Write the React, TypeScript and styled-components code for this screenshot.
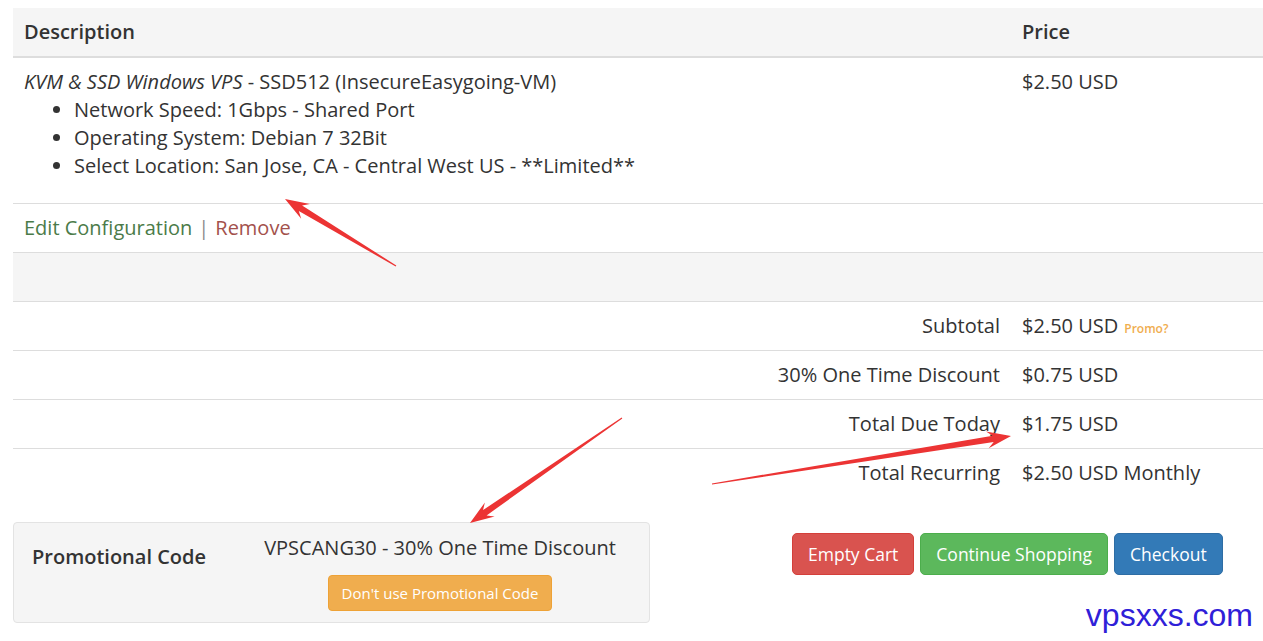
import React from 'react';
import styled, { createGlobalStyle } from 'styled-components';

const GlobalStyle = createGlobalStyle`
  html, body {
    margin: 0;
    padding: 0;
    background: #ffffff;
  }
  body {
    font-family: "Open Sans", "Noto Sans", Arial, sans-serif;
    font-size: 20px;
    line-height: 28px;
    color: #333333;
  }
`;

const Page = styled.div`
  position: relative;
  width: 1263px;
  height: 641px;
  overflow: hidden;
  padding: 8px 0 0 13px;
  box-sizing: border-box;
`;

const Table = styled.table`
  width: 1250px;
  border-collapse: collapse;
  table-layout: fixed;
`;

const HeadCell = styled.th<{ $width?: number }>`
  box-sizing: border-box;
  width: ${(p) => (p.$width ? `${p.$width}px` : 'auto')};
  background: #f5f5f5;
  text-align: left;
  font-weight: 600;
  padding: 10px 11px;
  border-bottom: 2px solid #dddddd;
`;

const Row = styled.tr<{ $shaded?: boolean; $first?: boolean }>`
  background: ${(p) => (p.$shaded ? '#f5f5f5' : 'transparent')};

  td {
    border-top: ${(p) => (p.$first ? 'none' : '1px solid #dddddd')};
  }
`;

const Cell = styled.td<{ $right?: boolean }>`
  padding: 10px 11px;
  vertical-align: top;
  text-align: ${(p) => (p.$right ? 'right' : 'left')};
`;

const Options = styled.ul`
  margin: 0 0 13px;
  padding-left: 50px;
  list-style: disc;
`;

const LinkText = styled.a<{ $tone: 'success' | 'danger' }>`
  color: ${(p) => (p.$tone === 'success' ? '#4b7b49' : '#a3514c')};
  text-decoration: none;
`;

const Divider = styled.span`
  color: #8a8a8a;
  margin: 0 6px;
`;

const PromoLink = styled.a`
  color: #f0ad4e;
  font-size: 12px;
  line-height: 1;
  font-weight: 600;
  margin-left: 6px;
  text-decoration: none;
`;

const Footer = styled.div`
  display: flex;
  align-items: flex-start;
  margin-top: 25px;
`;

const PromoBox = styled.div`
  width: 637px;
  box-sizing: border-box;
  display: flex;
  padding: 11px 18px 11px 18px;
  background: #f5f5f5;
  border: 1px solid #e3e3e3;
  border-radius: 4px;
`;

const PromoLabel = styled.div`
  width: 217px;
  flex: none;
  margin-top: 9px;
  font-weight: 600;
`;

const PromoBody = styled.div`
  flex: 1;
  text-align: center;
`;

const Button = styled.button<{ $variant: 'danger' | 'success' | 'primary' | 'warning'; $small?: boolean }>`
  font-family: "Open Sans", "Noto Sans", Arial, sans-serif;
  font-size: ${(p) => (p.$small ? '15px' : '17.5px')};
  line-height: ${(p) => (p.$small ? '20px' : '24px')};
  padding: ${(p) => (p.$small ? '7px 13px' : '8px 15px')};
  border-radius: ${(p) => (p.$small ? '4px' : '5px')};
  color: #ffffff;
  cursor: pointer;
  border: 1px solid
    ${(p) =>
      ({ danger: '#d43f3a', success: '#4cae4c', primary: '#2e6da4', warning: '#eea236' })[p.$variant]};
  background: ${(p) =>
    ({ danger: '#d9534f', success: '#5cb85c', primary: '#337ab7', warning: '#f0ad4e' })[p.$variant]};
`;

const PromoButton = styled(Button)`
  margin-top: 13px;
`;

const Actions = styled.div`
  display: flex;
  gap: 6px;
  margin: 11px 0 0 142px;
`;

const Watermark = styled.div`
  position: absolute;
  right: 10px;
  top: 597px;
  font-family: "Liberation Sans", Arial, sans-serif;
  font-size: 32px;
  line-height: 36px;
  color: #2f20d8;
`;

const Overlay = styled.svg`
  position: absolute;
  left: 0;
  top: 0;
  pointer-events: none;
`;

type Pt = [number, number];

// tapered annotation arrow from tail to tip
const arrowPoints = (tail: Pt, tip: Pt) => {
  const dx = tip[0] - tail[0];
  const dy = tip[1] - tail[1];
  const len = Math.hypot(dx, dy);
  const d: Pt = [dx / len, dy / len];
  const n: Pt = [-d[1], d[0]];
  const at = (along: number, side: number): string => {
    const x = tip[0] - d[0] * along + n[0] * side;
    const y = tip[1] - d[1] * along + n[1] * side;
    return `${x.toFixed(1)},${y.toFixed(1)}`;
  };
  return [
    at(len, 0.6),
    at(18, 3.2),
    at(24, 8.5),
    at(0, 0),
    at(24, -8.5),
    at(18, -3.2),
    at(len, -0.6),
  ].join(' ');
};

const arrows: { tail: Pt; tip: Pt }[] = [
  { tail: [396, 266], tip: [285, 199] },
  { tail: [622, 418], tip: [470, 523] },
  { tail: [712, 484], tip: [1011, 436] },
];

const totals = [
  { label: 'Subtotal', value: '$2.50 USD', promo: true },
  { label: '30% One Time Discount', value: '$0.75 USD' },
  { label: 'Total Due Today', value: '$1.75 USD' },
  { label: 'Total Recurring', value: '$2.50 USD Monthly' },
];

export default function App() {
  return (
    <>
      <GlobalStyle />
      <Page>
        <Table>
          <thead>
            <tr>
              <HeadCell $width={998}>Description</HeadCell>
              <HeadCell>Price</HeadCell>
            </tr>
          </thead>
          <tbody>
            <Row $first>
              <Cell>
                <em>KVM &amp; SSD Windows VPS</em> - SSD512 (InsecureEasygoing-VM)
                <Options>
                  <li>Network Speed: 1Gbps - Shared Port</li>
                  <li>Operating System: Debian 7 32Bit</li>
                  <li>Select Location: San Jose, CA - Central West US - **Limited**</li>
                </Options>
              </Cell>
              <Cell>$2.50 USD</Cell>
            </Row>
            <Row>
              <Cell>
                <LinkText $tone="success">Edit Configuration</LinkText>
                <Divider>|</Divider>
                <LinkText $tone="danger">Remove</LinkText>
              </Cell>
              <Cell />
            </Row>
            <Row $shaded>
              <Cell>&nbsp;</Cell>
              <Cell>&nbsp;</Cell>
            </Row>
            {totals.map((t) => (
              <Row key={t.label}>
                <Cell $right>{t.label}</Cell>
                <Cell>
                  {t.value}
                  {t.promo && <PromoLink>Promo?</PromoLink>}
                </Cell>
              </Row>
            ))}
          </tbody>
        </Table>

        <Footer>
          <PromoBox>
            <PromoLabel>Promotional Code</PromoLabel>
            <PromoBody>
              <div>VPSCANG30 - 30% One Time Discount</div>
              <PromoButton $variant="warning" $small>
                Don't use Promotional Code
              </PromoButton>
            </PromoBody>
          </PromoBox>
          <Actions>
            <Button $variant="danger">Empty Cart</Button>
            <Button $variant="success">Continue Shopping</Button>
            <Button $variant="primary">Checkout</Button>
          </Actions>
        </Footer>

        <Watermark>vpsxxs.com</Watermark>

        <Overlay width={1263} height={641} viewBox="0 0 1263 641">
          {arrows.map((a, i) => (
            <polygon key={i} points={arrowPoints(a.tail, a.tip)} fill="#ec3434" />
          ))}
        </Overlay>
      </Page>
    </>
  );
}
